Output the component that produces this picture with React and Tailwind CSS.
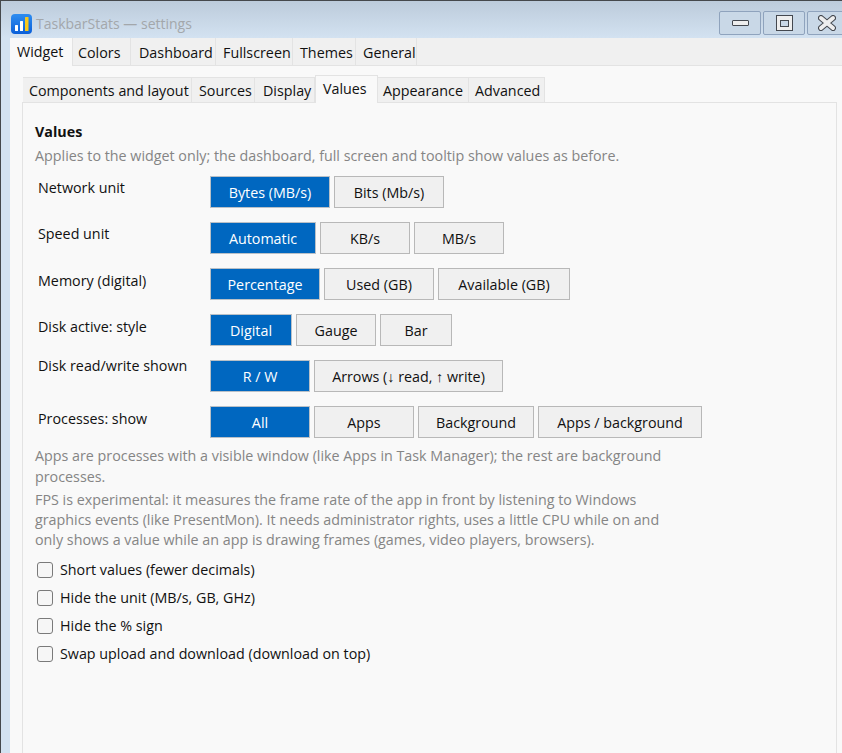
import React from "react";

const mainTabs = [
  ["Widget", "w-[63px] pl-[7px]"],
  ["Colors", "w-[58px] pl-[5px]"],
  ["Dashboard", "w-[85px] pl-[8px]"],
  ["Fullscreen", "w-[77px] pl-[7px]"],
  ["Themes", "w-[63px] pl-[7px]"],
  ["General", "w-[61px] pl-[7px]"],
];
const subTabs = [
  ["Components and layout", "w-[169px] pl-[6px]"],
  ["Sources", "w-[63px] pl-[7px]"],
  ["Display", "w-[60px] pl-[8px]"],
  ["Values", "w-[63px] pl-[7px]"],
  ["Appearance", "w-[91px] pl-[5px]"],
  ["Advanced", "w-[76px] pl-[6px]"],
];

const rows = [
  { label: "Network unit", labelClass: "pt-[0px]", options: [["Bytes (MB/s)", "w-[120px]"], ["Bits (Mb/s)", "w-[110px]"]] },
  { label: "Speed unit", labelClass: "pt-[0px]", options: [["Automatic", "w-[106px]"], ["KB/s", "w-[90px]"], ["MB/s", "w-[90px]"]] },
  { label: "Memory (digital)", labelClass: "pt-[1px]", options: [["Percentage", "w-[110px]"], ["Used (GB)", "w-[110px]"], ["Available (GB)", "w-[132px]"]] },
  { label: "Disk active: style", labelClass: "pt-[1px]", options: [["Digital", "w-[82px]"], ["Gauge", "w-[80px]"], ["Bar", "w-[72px]"]] },
  { label: "Disk read/write shown", labelClass: "-mt-[6px]", options: [["R / W", "w-[100px]"], ["Arrows (↓ read, ↑ write)", "w-[189px]"]] },
  { label: "Processes: show", labelClass: "pt-[1px]", options: [["All", "w-[100px]"], ["Apps", "w-[100px]"], ["Background", "w-[116px]"], ["Apps / background", "w-[164px]"]] },
];

const checks = [
  "Short values (fewer decimals)",
  "Hide the unit (MB/s, GB, GHz)",
  "Hide the % sign",
  "Swap upload and download (download on top)",
];

const AppIcon = () => (
  <svg width="21" height="20" viewBox="0 0 21 20" className="shrink-0">
    <defs>
      <linearGradient id="appBlue" x1="0" y1="0" x2="0" y2="1">
        <stop offset="0" stopColor="#2f8df0" />
        <stop offset="1" stopColor="#0a5fd8" />
      </linearGradient>
    </defs>
    <rect width="21" height="20" rx="4" fill="url(#appBlue)" />
    <rect x="4" y="11" width="3" height="6" rx="0.5" fill="#ffffff" />
    <rect x="9" y="7" width="3" height="10" rx="0.5" fill="#ffffff" />
    <rect x="14" y="3" width="3.5" height="14" rx="0.5" fill="#f8c81c" />
  </svg>
);

const CaptionButton = ({ children, width = "w-[42px]" }) => (
  <div className={`${width} h-[24px] shrink-0 rounded-[2px] border border-[#8fa3bd] bg-[#c9d8e7] flex items-center justify-center`}>
    {children}
  </div>
);

export default function App() {
  return (
    <div className="w-[842px] h-[753px] overflow-hidden bg-[#d3e2f1] border-t border-t-[#45484c] border-l border-l-[#45484c] flex flex-col text-[#111111] [font-family:'Open_Sans',sans-serif] text-[14.3px]">
      {/* title bar */}
      <div className="h-[37px] shrink-0 bg-gradient-to-b from-[#bccbdb] to-[#d3e2f1] flex pl-[10px]">
        <div className="flex items-center gap-[4px] h-[37px] pt-[9px]">
          <AppIcon />
          <span className="text-[#a3a7ab] text-[14px] -mt-[1px]">TaskbarStats — settings</span>
        </div>
        <div className="ml-auto flex gap-[2px] pt-[10px] w-[123px] shrink-0">
          <CaptionButton>
            <div className="w-[17px] h-[6px] rounded-[1px] bg-[#eeeeee] border border-[#44484f]" />
          </CaptionButton>
          <CaptionButton>
            <div className="w-[17px] h-[16px] bg-[#eeeeee] border border-[#44484f] flex items-center justify-center">
              <div className="w-[9px] h-[7px] bg-[#c9d8e7] border border-[#44484f]" />
            </div>
          </CaptionButton>
          <CaptionButton width="w-[40px]">
            <svg width="18" height="16" viewBox="0 0 18 16">
              <path d="M3 3 L15 13 M15 3 L3 13" stroke="#44484f" strokeWidth="6" strokeLinecap="round" />
              <path d="M3 3 L15 13 M15 3 L3 13" stroke="#eeeeee" strokeWidth="4" strokeLinecap="round" />
            </svg>
          </CaptionButton>
        </div>
      </div>

      <div className="flex-1 ml-[9px] min-h-0 flex flex-col bg-[#f9f9f9]">
        {/* main tabs */}
        <div className="h-[28px] shrink-0 bg-[#f0f0f0] border-b border-[#e3e3e3] flex items-end">
          {mainTabs.map(([tab, cls], i) => (
            <div
              key={tab}
              className={
                i === 0
                  ? `${cls} h-[28px] -mb-px bg-[#f9f9f9] border-r border-[#e3e3e3] leading-[28px] relative`
                  : `${cls} h-[27px] border-r border-[#e3e3e3] leading-[29px] whitespace-nowrap`
              }
            >
              {tab}
            </div>
          ))}
        </div>

        <div className="flex-1 min-h-0 pt-[10px] pl-[12px] pr-[5px] flex flex-col">
          {/* sub tabs */}
          <div className="h-[27px] shrink-0 flex items-end border-b border-[#e3e3e3]">
            <div className="w-[1px]" />
            {subTabs.map(([tab, cls]) => (
              <div
                key={tab}
                className={
                  tab === "Values"
                    ? `${cls} h-[28px] -mb-px bg-[#f9f9f9] border-x border-t border-[#e3e3e3] leading-[25px] whitespace-nowrap`
                    : `${cls} h-[25px] bg-[#f0f0f0] border-r border-t border-[#e3e3e3] leading-[26px] whitespace-nowrap`
                }
              >
                {tab}
              </div>
            ))}
          </div>

          {/* panel */}
          <div className="flex-1 min-h-0 border-x border-[#e3e3e3] pl-[12px] pt-[19px]">
            <div className="font-bold leading-[20px]">Values</div>
            <div className="text-[#858585] leading-[20px] mt-[4px] whitespace-nowrap">
              Applies to the widget only; the dashboard, full screen and tooltip show values as before.
            </div>

            <div className="mt-[10px] flex flex-col gap-[14px]">
              {rows.map((row) => (
                <div key={row.label} className="flex h-[32px]">
                  <div className={`w-[175px] pl-[3px] leading-[24px] whitespace-nowrap ${row.labelClass}`}>{row.label}</div>
                  <div className="flex gap-[4px]">
                    {row.options.map(([text, width], i) => (
                      <div
                        key={text}
                        className={
                          i === 0
                            ? `${width} h-[32px] pt-[1px] bg-[#0067c0] border border-[#b9c0c7] text-white flex items-center justify-center whitespace-nowrap`
                            : `${width} h-[32px] pt-[1px] bg-[#f0f0f0] border border-[#b8b8b8] flex items-center justify-center whitespace-nowrap`
                        }
                      >
                        {text}
                      </div>
                    ))}
                  </div>
                </div>
              ))}
            </div>

            <div className="mt-[7px] w-[640px] text-[#858585] leading-[21px]">
              Apps are processes with a visible window (like Apps in Task Manager); the rest are background processes.
            </div>
            <div className="mt-[3px] w-[640px] text-[#858585] leading-[20px]">
              FPS is experimental: it measures the frame rate of the app in front by listening to Windows graphics events (like PresentMon). It needs administrator rights, uses a little CPU while on and only shows a value while an app is drawing frames (games, video players, browsers).
            </div>

            <div className="mt-[6px] flex flex-col">
              {checks.map((text) => (
                <label key={text} className="h-[28px] flex items-center gap-[7px] pl-[2px]">
                  <span className="w-[16px] h-[16px] rounded-[3px] border border-[#7a7a7a] bg-[#f6f6f6] shrink-0" />
                  <span className="whitespace-nowrap">{text}</span>
                </label>
              ))}
            </div>
          </div>
        </div>
      </div>
    </div>
  );
}
